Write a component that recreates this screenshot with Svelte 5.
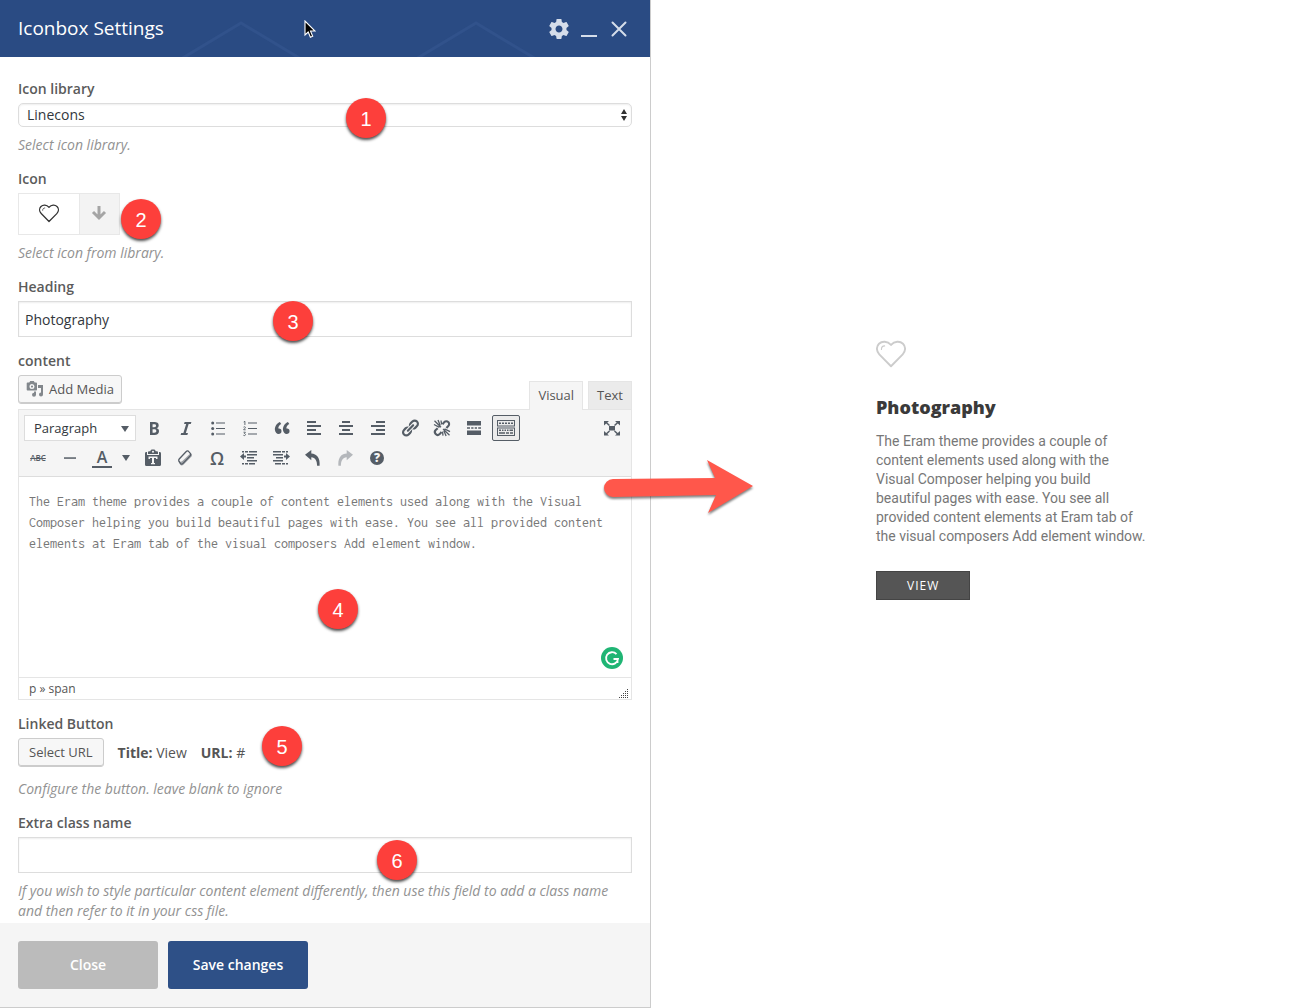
<script>
  let library = $state('Linecons');
  let heading = $state('Photography');
  let extraClass = $state('');
  let blockFormat = $state('Paragraph');
  let content = $state(
    'The Eram theme provides a couple of content elements used along with the Visual Composer helping you build beautiful pages with ease. You see all provided content elements at Eram tab of the visual composers Add element window.'
  );

  const rowOne = [
    { id: 'bold', label: 'Bold' },
    { id: 'italic', label: 'Italic' },
    { id: 'bullets', label: 'Bulleted list' },
    { id: 'numbers', label: 'Numbered list' },
    { id: 'quote', label: 'Blockquote' },
    { id: 'left', label: 'Align left' },
    { id: 'center', label: 'Align center' },
    { id: 'right', label: 'Align right' },
    { id: 'link', label: 'Insert link' },
    { id: 'unlink', label: 'Remove link' },
    { id: 'more', label: 'Insert Read More tag' },
    { id: 'kitchen', label: 'Toolbar toggle', active: true }
  ];
  const rowTwo = [
    { id: 'paste', label: 'Paste as text' },
    { id: 'eraser', label: 'Clear formatting' },
    { id: 'omega', label: 'Special character' },
    { id: 'outdent', label: 'Decrease indent' },
    { id: 'indent', label: 'Increase indent' },
    { id: 'undo', label: 'Undo' },
    { id: 'redo', label: 'Redo' },
    { id: 'help', label: 'Keyboard shortcuts' }
  ];
</script>

{#snippet heart(size)}
  <svg width={size} height={size} viewBox="0 0 32 32" fill="none" stroke="currentColor" stroke-linejoin="round" stroke-linecap="round" aria-hidden="true">
    <path stroke-width="2" d="M16 28 3.500 15.300C.2 11.800.2 7 3.200 4c3.200-3.100 9-3 12.800 1.300C19.800 1 25.600.9 28.800 4c3 3 3 7.800-.3 11.300z" />
    <path stroke-width="1.200" d="M5.800 10c0-2.200 1.400-3.600 3.400-3.700" />
  </svg>
{/snippet}

{#snippet glyph(id)}
  {#if id === 'omega'}
    <span class="omega">Ω</span>
  {:else if id === 'strike'}
    <span class="abc">ABC</span>
  {:else if id === 'help'}
    <span class="help">?</span>
  {:else}
    <svg class:faded={id === 'redo'} width="20" height="20" viewBox="0 0 20 20" fill="currentColor" aria-hidden="true">
      {#if id === 'bold'}
        <path d="M6 4v13h4.540c1.370 0 2.460-.33 3.260-1 .8-.66 1.200-1.580 1.200-2.770 0-.84-.17-1.510-.51-2.010s-.9-.85-1.670-1.030v-.09c.57-.1 1.020-.4 1.360-.9s.51-1.130.51-1.910c0-1.140-.39-1.980-1.170-2.500C12.750 4.260 11.500 4 9.780 4H6zm2.570 5.150V6.260h1.360c.73 0 1.270.11 1.610.32.34.22.51.58.51 1.070 0 .54-.16.92-.47 1.150s-.82.35-1.510.35h-1.500zm0 2.190h1.600c1.440 0 2.160.53 2.160 1.610 0 .6-.17 1.050-.51 1.340s-.86.43-1.570.43H8.570v-3.380z" />
      {:else if id === 'italic'}
        <path d="M14.780 6h-2.130l-2.800 9h2.120l-.62 2H4.600l.62-2h2.140l2.800-9H8.030l.62-2h6.750z" />
      {:else if id === 'bullets'}
        <circle cx="4.700" cy="5" r="1.500" /><circle cx="4.700" cy="10.500" r="1.500" /><circle cx="4.700" cy="16" r="1.500" />
        <path d="M8 4.500h9v1H8zM8 10h9v1H8zM8 15.500h9v1H8z" />
      {:else if id === 'numbers'}
        <path d="M8 4.500h9v1H8zM8 10h9v1H8zM8 15.500h9v1H8z" />
        <path fill="none" stroke="currentColor" stroke-width=".9" d="M3.700 4 4.900 3.300V7M3.500 9.200c.5-.7 2-.6 1.900.3-.1.700-1.100 1.200-1.800 2.300h2.100M3.500 14.200h1.900l-1 1.300c1.600.1 1.400 2.200 0 2.100-.4 0-.7-.1-1-.3" />
      {:else if id === 'quote'}
        <path d="M9.490 13.220c0-.74-.2-1.380-.61-1.900-.62-.78-1.830-.88-2.530-.72-.29-1.650 1.110-3.750 2.920-4.650L7.880 4c-2.730 1.300-5.420 4.280-4.960 8.050C3.210 14.430 4.590 16 6.540 16c.85 0 1.560-.25 2.120-.75s.83-1.180.83-2.030zm8.050 0c0-.74-.2-1.380-.61-1.900-.63-.78-1.830-.88-2.530-.72-.29-1.650 1.110-3.750 2.920-4.650L15.930 4c-2.730 1.300-5.410 4.280-4.950 8.050.29 2.380 1.660 3.950 3.610 3.950.85 0 1.560-.25 2.120-.75s.83-1.180.83-2.030z" />
      {:else if id === 'left'}
        <path d="M3 3h9v2H3zM3 7h14v2H3zM3 11h9v2H3zM3 15h14v2H3z" />
      {:else if id === 'center'}
        <path d="M6 3h8v2H6zM3 7h14v2H3zM6 11h8v2H6zM3 15h14v2H3z" />
      {:else if id === 'right'}
        <path d="M8 3h9v2H8zM3 7h14v2H3zM8 11h9v2H8zM3 15h14v2H3z" />
      {:else if id === 'link'}
        <path d="M17.740 2.760c1.680 1.690 1.680 4.410 0 6.100l-1.530 1.520c-1.120 1.120-2.700 1.470-4.140 1.090l2.620-2.610.76-.77.76-.76c.84-.84.84-2.200 0-3.040-.84-.85-2.200-.85-3.040 0l-.77.76-3.380 3.380c-.37-1.440-.02-3.020 1.100-4.140l1.520-1.530c1.690-1.680 4.420-1.680 6.100 0zM8.590 13.430l5.340-5.340c.42-.42.42-1.100 0-1.520-.44-.43-1.130-.39-1.530 0l-5.330 5.340c-.42.42-.42 1.100 0 1.520.44.43 1.130.39 1.520 0zm-.76 2.290l4.140-4.150c.38 1.440.03 3.020-1.090 4.140l-1.520 1.530c-1.690 1.680-4.410 1.680-6.100 0-1.680-1.680-1.680-4.420 0-6.100l1.530-1.520c1.120-1.120 2.700-1.470 4.140-1.100l-4.140 4.150c-.85.84-.85 2.200 0 3.050.84.84 2.200.84 3.040 0z" />
      {:else if id === 'unlink'}
        <g fill="none" stroke="currentColor">
          <path stroke-width="2.100" d="M10.500 6.200 12.300 4.100c1.200-1.200 2.900-1.200 4 0 1.100 1.100 1.100 2.800 0 3.900L14.400 9.900M9.500 14 7.700 16.100c-1.200 1.100-2.900 1.100-4 0-1.100-1.200-1.100-2.900 0-4l2-1.900" />
          <path stroke-width="1.300" d="M9 9.200 2.500 2.800M8.200 7.600 6 2M7.500 9.300 2 6.500M9.600 6.500 9 2.500M11 10.900l6.500 6.400M11.800 12.500l2.300 5.500M12.500 10.800l5.500 2.800M10.500 13.600l.5 4" />
        </g>
      {:else if id === 'more'}
        <path d="M3 3h14v4.500H3zM3 9.300h3v1.500H3zM7.200 9.300h2.300v1.500H7.200zM10.700 9.300H13v1.500h-2.300zM14.200 9.300H17v1.500h-2.800zM3 12.600h14v4.500H3z" />
      {:else if id === 'kitchen'}
        <path fill-rule="evenodd" d="M1 2h18v6.500H1zM2 3v4.500h16V3zM1 9.500h18V18H1zM2 10.500V17h16v-6.500z" />
        <path d="M3 4.500h2v1.600H3zM6 4.500h2v1.600H6zM9 4.500h2v1.600H9zM12 4.500h2v1.600h-2zM15 4.500h2v1.600h-2zM3 11.500h2v1.600H3zM6 11.500h1.500v1.600H6zM8.500 11.500H10v1.600H8.500zM11 11.500h1.500v1.600H11zM13.500 11.500H17v1.600h-3.500zM3 14.200h6v1.600H3zM10 14.200h3v1.600h-3zM14 14.200h3v1.600h-3z" />
      {:else if id === 'full'}
        <path d="M7 8h6v4.500H7zM2 3h5L5.300 4.500 8 7l-1 1-2.800-2.500L2 7.500zM18 3h-5l1.700 1.500L12 7l1 1 2.800-2.500L18 7.500zM2 17.500h5L5.300 16 8 13.500l-1-1L4.200 15 2 13zM18 17.500h-5l1.700-1.500-2.700-2.500 1-1 2.800 2.500L18 13z" />
      {:else if id === 'hr'}
        <path d="M4 9.300h12v1.500H4z" />
      {:else if id === 'paste'}
        <path fill-rule="evenodd" d="M2 5.500C2 4.700 2.500 4 3.300 4H4v3h12V4h.7c.8 0 1.300.7 1.300 1.500v11c0 .8-.5 1.500-1.300 1.500H3.300C2.500 18 2 17.300 2 16.500zM5.500 8.500V11H7v-1h2v5H8v1.300h4V15h-1v-5h2v1h1.500V8.500z" />
        <path fill-rule="evenodd" d="M5 6V4.500C5 3.700 5.500 3.300 6.300 3.300h1C7.500 1.900 8.500 1.500 10 1.500s2.500.4 2.700 1.800h1c.8 0 1.300.4 1.300 1.200V6zM10 2.700a1 1 0 1 0 0 2 1 1 0 0 0 0-2z" />
      {:else if id === 'eraser'}
        <path fill="none" stroke="currentColor" stroke-width="1.300" stroke-linejoin="round" d="M11 3.700 4.200 11c-.7.8-.7 1.500-.2 2.200l1.500 2.300c.6.900 1.500.9 2.300.1l7.400-7.700c.7-.8.8-1.500.3-2.300L13.800 3.600c-.8-1.100-1.800-.9-2.800.1z" />
        <path d="M3.500 12.500c.8 1.300 2.500 1.800 3.900.6L15.800 5l.9 1.500c.4.800.3 1.500-.4 2.200l-7.900 8c-1.100 1.100-2.500 1-3.300-.2l-1.700-2.700z" opacity=".55" />
      {:else if id === 'outdent' || id === 'indent'}
        <g transform={id === 'indent' ? 'translate(20 0) scale(-1 1)' : ''}>
          <path d="M3 3h2v1.500H3zM6 3h3v1.500H6zM10 3h8v1.500h-8zM8 6h10v1.500H8zM8 9h7v1.500H8zM8 12h10v1.500H8zM3 15h2v1.500H3zM6 15h3v1.500H6zM10 15h6v1.500h-6zM1 8.500 5 5v2.500h2v2H5V12z" />
        </g>
      {:else if id === 'undo'}
        <path d="M2 6.800 8.300 2v3.500c5.500.2 9 4.500 8.300 12.200h-2.500c0-5-1.800-8.200-5.800-8.500v3.100z" />
      {:else if id === 'redo'}
        <path d="M18 6.800 11.700 2v3.500C6.200 5.700 2.700 10 3.400 17.700h2.500c0-5 1.800-8.200 5.800-8.500v3.100z" />
      {/if}
    </svg>
  {/if}
{/snippet}

{#snippet tool(item)}
  <button type="button" class="tool" class:active={item.active} aria-label={item.label}>{@render glyph(item.id)}</button>
{/snippet}

<main class="page">
  <section class="panel" aria-label="Iconbox Settings">
    <header class="panel-head">
      <svg class="ridges" width="650" height="57" viewBox="0 0 650 57" fill="none" stroke="#31528b" stroke-width="3" aria-hidden="true">
        <path d="M181 59 241 23l60 36M416 59l60-36 60 36" />
      </svg>
      <h1>Iconbox Settings</h1>
      <div class="window-tools">
        <button type="button" aria-label="Settings">
          <svg width="24" height="24" viewBox="0 0 24 24" fill="currentColor" aria-hidden="true"><path d="M19.430 12.980c.04-.32.07-.64.07-.98s-.03-.66-.07-.98l2.110-1.650c.19-.15.24-.42.12-.64l-2-3.460c-.12-.22-.39-.3-.61-.22l-2.490 1c-.52-.4-1.080-.73-1.690-.98l-.38-2.650C14.460 2.180 14.250 2 14 2h-4c-.25 0-.46.18-.49.42l-.38 2.650c-.61.25-1.170.59-1.690.98l-2.490-1c-.23-.09-.49 0-.61.22l-2 3.460c-.13.22-.07.49.12.64l2.110 1.650c-.04.32-.07.65-.07.98s.03.66.07.98l-2.110 1.650c-.19.15-.24.42-.12.64l2 3.460c.12.22.39.3.61.22l2.490-1c.52.4 1.080.73 1.690.98l.38 2.650c.03.24.24.42.49.42h4c.25 0 .46-.18.49-.42l.38-2.650c.61-.25 1.170-.59 1.690-.98l2.490 1c.23.09.49 0 .61-.22l2-3.460c.12-.22.07-.49-.12-.64l-2.110-1.650zM12 15.500c-1.930 0-3.500-1.570-3.500-3.500s1.570-3.500 3.500-3.500 3.500 1.570 3.500 3.500-1.570 3.500-3.500 3.500z" /></svg>
        </button>
        <button type="button" aria-label="Minimize">
          <svg width="24" height="24" viewBox="0 0 24 24" fill="currentColor" aria-hidden="true"><path d="M4 18h16v2H4z" /></svg>
        </button>
        <button type="button" aria-label="Close window">
          <svg width="24" height="24" viewBox="0 0 24 24" fill="none" stroke="currentColor" stroke-width="2" stroke-linecap="round" aria-hidden="true"><path d="m5.500 5.500 13 13M18.500 5.500l-13 13" /></svg>
        </button>
      </div>
      <svg class="cursor" width="12" height="20" viewBox="0 0 12 20" aria-hidden="true"><path d="M1 1v14l3.200-3 2.200 5.300 2.300-1L6.500 11H11z" fill="#000" stroke="#fff" stroke-width="1.100" /></svg>
    </header>

    <form class="fields">
      <div class="field">
        <label for="library">Icon library</label>
        <div class="select-wrap">
          <select id="library" bind:value={library}>
            <option>Linecons</option>
            <option>Font Awesome</option>
          </select>
          <svg class="updown" width="8" height="14" viewBox="0 0 8 14" fill="#333" aria-hidden="true"><path d="M4 1 7 6H1zM4 13 1 8h6z" /></svg>
        </div>
        <p class="hint">Select icon library.</p>
        <span class="badge b1">1</span>
      </div>

      <div class="field">
        <span class="label" id="icon-label">Icon</span>
        <div class="picker" role="group" aria-labelledby="icon-label">
          <span class="picked">{@render heart(20)}</span>
          <button type="button" aria-label="Open icon list">
            <svg width="16" height="16" viewBox="0 0 16 16" fill="none" stroke="currentColor" stroke-width="3" aria-hidden="true"><path d="M8 1v12M2 7l6 6 6-6" /></svg>
          </button>
        </div>
        <p class="hint">Select icon from library.</p>
        <span class="badge b2">2</span>
      </div>

      <div class="field">
        <label for="heading">Heading</label>
        <input id="heading" type="text" bind:value={heading} />
        <span class="badge b3">3</span>
      </div>

      <div class="field">
        <label for="content">content</label>
        <div class="editor-top">
          <button type="button" class="wp-button">
            <svg width="18" height="18" viewBox="0 0 18 18" fill="#82878c" aria-hidden="true">
              <path fill-rule="evenodd" d="M1.500 2.500h1.800L4.200 1h3.600l.9 1.500h1.500c.5 0 .8.300.8.800v6.400c0 .5-.3.800-.8.800H1.500c-.5 0-.8-.3-.8-.8V3.300c0-.5.300-.8.800-.8zM6 4.100a2.500 2.500 0 1 0 0 5 2.500 2.500 0 0 0 0-5zm0 1.400a1.100 1.100 0 1 1 0 2.200 1.100 1.100 0 0 1 0-2.200z" />
              <path d="M12 5h5v9.500a2 2 0 1 1-2-2V8h-3zM10 11.500v3.300a2 2 0 1 1-2-2v-1.300z" />
            </svg>
            Add Media
          </button>
          <div class="tabs">
            <button type="button" class="tab current">Visual</button>
            <button type="button" class="tab">Text</button>
          </div>
        </div>
        <div class="editor">
          <div class="toolbar">
            <div class="tool-row">
              <div class="format">
                <select bind:value={blockFormat} aria-label="Block format">
                  <option>Paragraph</option>
                  <option>Heading 1</option>
                </select>
                <span class="caret" aria-hidden="true"></span>
              </div>
              {#each rowOne as item (item.id)}{@render tool(item)}{/each}
              <span class="push">{@render tool({ id: 'full', label: 'Distraction-free writing' })}</span>
            </div>
            <div class="tool-row">
              {@render tool({ id: 'strike', label: 'Strikethrough' })}
              {@render tool({ id: 'hr', label: 'Horizontal line' })}
              <div class="split">
                <button type="button" class="tool" aria-label="Text color"><span class="ink">A</span></button>
                <button type="button" class="tool narrow" aria-label="Choose text color"><span class="caret"></span></button>
              </div>
              {#each rowTwo as item (item.id)}{@render tool(item)}{/each}
            </div>
          </div>
          <div class="writing">
            <textarea id="content" bind:value={content} spellcheck="false"></textarea>
            <svg class="grammar" width="22" height="22" viewBox="0 0 22 22" aria-hidden="true">
              <circle cx="11" cy="11" r="11" fill="#1fb574" />
              <path d="M15.500 7.200A6 6 0 1 0 17 12h-4.500M16.500 12v4" fill="none" stroke="#fff" stroke-width="1.800" />
            </svg>
          </div>
          <div class="status">
            <span>p » span</span>
            <svg width="10" height="10" viewBox="0 0 10 10" fill="#444" aria-hidden="true"><path d="M8 0h1v1H8zM6 2h1v1H6zM8 2h1v1H8zM4 4h1v1H4zM6 4h1v1H6zM8 4h1v1H8zM2 6h1v1H2zM4 6h1v1H4zM6 6h1v1H6zM8 6h1v1H8zM0 8h1v1H0zM2 8h1v1H2zM4 8h1v1H4zM6 8h1v1H6zM8 8h1v1H8z" /></svg>
          </div>
        </div>
        <span class="badge b4">4</span>
      </div>

      <div class="field">
        <span class="label">Linked Button</span>
        <div class="link-row">
          <button type="button" class="wp-button">Select URL</button>
          <span><b>Title:</b> View</span>
          <span><b>URL:</b> #</span>
        </div>
        <p class="hint">Configure the button. leave blank to ignore</p>
        <span class="badge b5">5</span>
      </div>

      <div class="field">
        <label for="extra">Extra class name</label>
        <input id="extra" type="text" bind:value={extraClass} />
        <p class="hint">If you wish to style particular content element differently, then use this field to add a class name and then refer to it in your css file.</p>
        <span class="badge b6">6</span>
      </div>
    </form>

    <footer class="panel-foot">
      <button type="button" class="action">Close</button>
      <button type="button" class="action primary">Save changes</button>
    </footer>

    <svg class="arrow" width="160" height="70" viewBox="0 0 160 70" aria-hidden="true">
      <path d="M13 25 115 24 107 6 153 32 108 59 116 41 13 43a9 9 0 0 1 0-18z" fill="#ff574b" />
    </svg>
  </section>

  <section class="preview" aria-label="Preview">
    <article class="iconbox">
      <div class="iconbox-icon">{@render heart(30)}</div>
      <h2>Photography</h2>
      <p>The Eram theme provides a couple of content elements used along with the Visual Composer helping you build beautiful pages with ease. You see all provided content elements at Eram tab of the visual composers Add element window.</p>
      <a href="#view" class="view">VIEW</a>
    </article>
  </section>
</main>

<style>
  :global(body) {
    margin: 0;
    background: #fff;
  }
  .page {
    display: flex;
    min-height: 100vh;
    font-family: "Open Sans", sans-serif;
    font-size: 14px;
    line-height: 20px;
    color: #555;
  }
  .page :is(button, input, select, textarea) {
    box-sizing: border-box;
    margin: 0;
    font: inherit;
    color: inherit;
    border-radius: 0;
  }
  button {
    cursor: pointer;
  }
  .panel {
    position: relative;
    box-sizing: border-box;
    flex: 0 1 651px;
    min-width: 0;
    display: flex;
    flex-direction: column;
    border-right: 1px solid #ccc;
  }
  .panel-head {
    position: relative;
    display: flex;
    align-items: center;
    justify-content: space-between;
    height: 57px;
    padding: 0 19px 0 18px;
    background: #2a4b83;
    color: #fff;
    overflow: hidden;
  }
  .ridges {
    position: absolute;
    left: 0;
    top: 0;
  }
  .cursor {
    position: absolute;
    left: 304px;
    top: 20px;
  }
  h1 {
    position: relative;
    margin: 0;
    padding-bottom: 2px;
    font-size: 19px;
    line-height: 28px;
    font-weight: 400;
  }
  .window-tools {
    position: relative;
    display: flex;
    gap: 6px;
  }
  .page .window-tools button {
    display: flex;
    padding: 0;
    border: 0;
    background: none;
    color: #d5ddea;
  }
  .fields {
    flex: 1;
    display: flex;
    flex-direction: column;
    gap: 14px;
    padding: 22px 18px 2px;
  }
  .field {
    position: relative;
    display: flex;
    flex-direction: column;
  }
  label,
  .label {
    margin-bottom: 4px;
    font-weight: 600;
    color: #5b5b5b;
  }
  .hint {
    margin: 8px 0 0;
    font-style: italic;
    color: #929292;
  }
  .link-row + .hint {
    margin-top: 12px;
  }
  .select-wrap {
    position: relative;
    display: flex;
  }
  .page .select-wrap select {
    flex: 1;
    height: 24px;
    padding: 0 8px;
    appearance: none;
    border: 1px solid #ddd;
    border-radius: 5px;
    background: #fff;
    color: #32373c;
    box-shadow: inset 0 1px 2px rgba(0, 0, 0, 0.07);
  }
  .updown {
    position: absolute;
    right: 4px;
    top: 5px;
  }
  .picker {
    display: flex;
    width: 102px;
    height: 42px;
    box-sizing: border-box;
    border: 1px solid #e8e8e8;
  }
  .picked {
    flex: 1;
    display: grid;
    place-items: center;
    color: #333;
  }
  .page .picker button {
    display: grid;
    place-items: center;
    width: 40px;
    padding: 0 2px 2px 0;
    border: 0;
    border-left: 1px solid #e8e8e8;
    background: #f3f3f3;
    color: #a5a5a5;
  }
  input {
    height: 36px;
    padding: 0 6px;
    border: 1px solid #ddd;
    background: #fff;
    box-shadow: inset 0 1px 2px rgba(0, 0, 0, 0.07);
  }
  .page input {
    color: #32373c;
  }
  .wp-button {
    display: flex;
    align-items: center;
    gap: 5px;
    height: 29px;
    padding: 0 10px 1px;
    border: 1px solid #ccc;
    background: #f7f7f7;
    box-shadow: inset 0 -1px 0 #ccc;
    white-space: nowrap;
  }
  .page .wp-button {
    border-radius: 3px;
    font-size: 13px;
  }
  .editor-top .wp-button {
    padding: 0 7px 1px;
  }
  .editor-top {
    display: flex;
    justify-content: space-between;
    height: 34px;
  }
  .tabs {
    position: relative;
    display: flex;
    align-items: flex-end;
    gap: 5px;
  }
  .page .tab {
    height: 28px;
    padding: 0 8px 2px;
    border: 1px solid #e5e5e5;
    border-bottom: 0;
    background: #ebebeb;
    font-size: 13px;
  }
  .page .tab.current {
    height: 29px;
    margin-bottom: -1px;
    padding-bottom: 3px;
    background: #f5f5f5;
  }
  .editor {
    border: 1px solid #e5e5e5;
  }
  .toolbar {
    display: flex;
    flex-direction: column;
    gap: 4px;
    padding: 5px;
    background: #f5f5f5;
    border-bottom: 1px solid #ddd;
  }
  .tool-row {
    display: flex;
    gap: 4px;
  }
  .push {
    display: flex;
    margin-left: auto;
  }
  .split {
    display: flex;
  }
  .tool {
    display: grid;
    place-items: center;
    flex: none;
    width: 28px;
    height: 26px;
    padding: 0;
    border: 1px solid transparent;
    background: none;
  }
  .page .tool {
    color: #555d66;
  }
  .page .tool.active {
    border-color: #555d66;
    border-radius: 2px;
    background: #ebebeb;
  }
  .tool.narrow {
    width: 19px;
  }
  .faded {
    opacity: 0.4;
  }
  .caret {
    width: 0;
    height: 0;
    border: 4px solid transparent;
    border-top: 6px solid #555d66;
    border-bottom: 0;
  }
  .format {
    position: relative;
    width: 112px;
  }
  .page .format select {
    width: 100%;
    height: 26px;
    padding: 0 9px;
    appearance: none;
    border: 1px solid #ddd;
    background: #fff;
    font-size: 13px;
    color: #32373c;
  }
  .format .caret {
    position: absolute;
    right: 7px;
    top: 11px;
    pointer-events: none;
  }
  .omega {
    font-size: 18px;
    line-height: 20px;
    font-weight: 600;
  }
  .abc {
    font-size: 8px;
    line-height: 10px;
    font-weight: 600;
    text-decoration: line-through;
  }
  .ink {
    width: 20px;
    box-sizing: border-box;
    border-bottom: 2px solid #555d66;
    font-size: 16px;
    line-height: 18px;
    font-weight: 600;
  }
  .help {
    width: 14px;
    height: 14px;
    border-radius: 50%;
    background: #555d66;
    color: #f5f5f5;
    font-size: 12px;
    line-height: 14px;
    font-weight: 800;
  }
  .writing {
    position: relative;
    display: flex;
  }
  textarea {
    width: 100%;
    height: 200px;
    padding: 14px 10px;
    border: 0;
    resize: none;
    overflow: hidden;
    background: #fff;
  }
  .page textarea {
    font-family: Inconsolata, "Liberation Mono", monospace;
    font-size: 14px;
    line-height: 21px;
    color: #777;
  }
  .grammar {
    position: absolute;
    right: 8px;
    bottom: 8px;
  }
  .status {
    display: flex;
    justify-content: space-between;
    align-items: flex-end;
    padding: 1px 2px 0 10px;
    border-top: 1px solid #e5e5e5;
    font-size: 12px;
    line-height: 20px;
  }
  .link-row {
    display: flex;
    align-items: center;
    gap: 14px;
  }
  .badge {
    position: absolute;
    width: 40px;
    height: 40px;
    border-radius: 50%;
    background: #fd3f3b;
    box-shadow: 0 2px 3px rgba(0, 0, 0, 0.7);
    color: #fff;
    font-family: "Liberation Sans", sans-serif;
    font-size: 20px;
    line-height: 42px;
    text-align: center;
  }
  .b1 {
    left: 328px;
    top: 19px;
  }
  .b2 {
    left: 103px;
    top: 30px;
  }
  .b3 {
    left: 255px;
    top: 24px;
  }
  .b4 {
    left: 300px;
    top: 238px;
  }
  .b5 {
    left: 244px;
    top: 12px;
  }
  .b6 {
    left: 359px;
    top: 27px;
  }
  .panel-foot {
    display: flex;
    gap: 10px;
    padding: 18px;
    background: #f5f5f5;
    border-bottom: 1px solid #ccc;
  }
  .action {
    width: 140px;
    height: 48px;
    border: 0;
    background: #bbb;
  }
  .page .action {
    border-radius: 3px;
    color: #fff;
    font-weight: 600;
  }
  .action.primary {
    background: #2e5087;
  }
  .arrow {
    position: absolute;
    left: 600px;
    top: 454px;
    z-index: 1;
    filter: drop-shadow(0 2px 1px rgba(0, 0, 0, 0.5));
    pointer-events: none;
  }
  .preview {
    flex: 1;
    min-width: 0;
    padding: 340px 24px 24px 225px;
  }
  .iconbox {
    max-width: 272px;
  }
  .iconbox-icon {
    display: flex;
    color: #ccc;
  }
  h2 {
    margin: 25px 0 13px;
    font-size: 18px;
    line-height: 24px;
    font-weight: 800;
    color: #3a3a3a;
  }
  .iconbox p {
    margin: 0 0 25px;
    font-family: Roboto, sans-serif;
    line-height: 19px;
    color: #777;
  }
  .view {
    display: inline-block;
    padding: 0 30px;
    border: 1px solid #444;
    background: #555;
    color: #fff;
    font-size: 12px;
    line-height: 27px;
    letter-spacing: 1px;
    text-decoration: none;
  }
</style>
